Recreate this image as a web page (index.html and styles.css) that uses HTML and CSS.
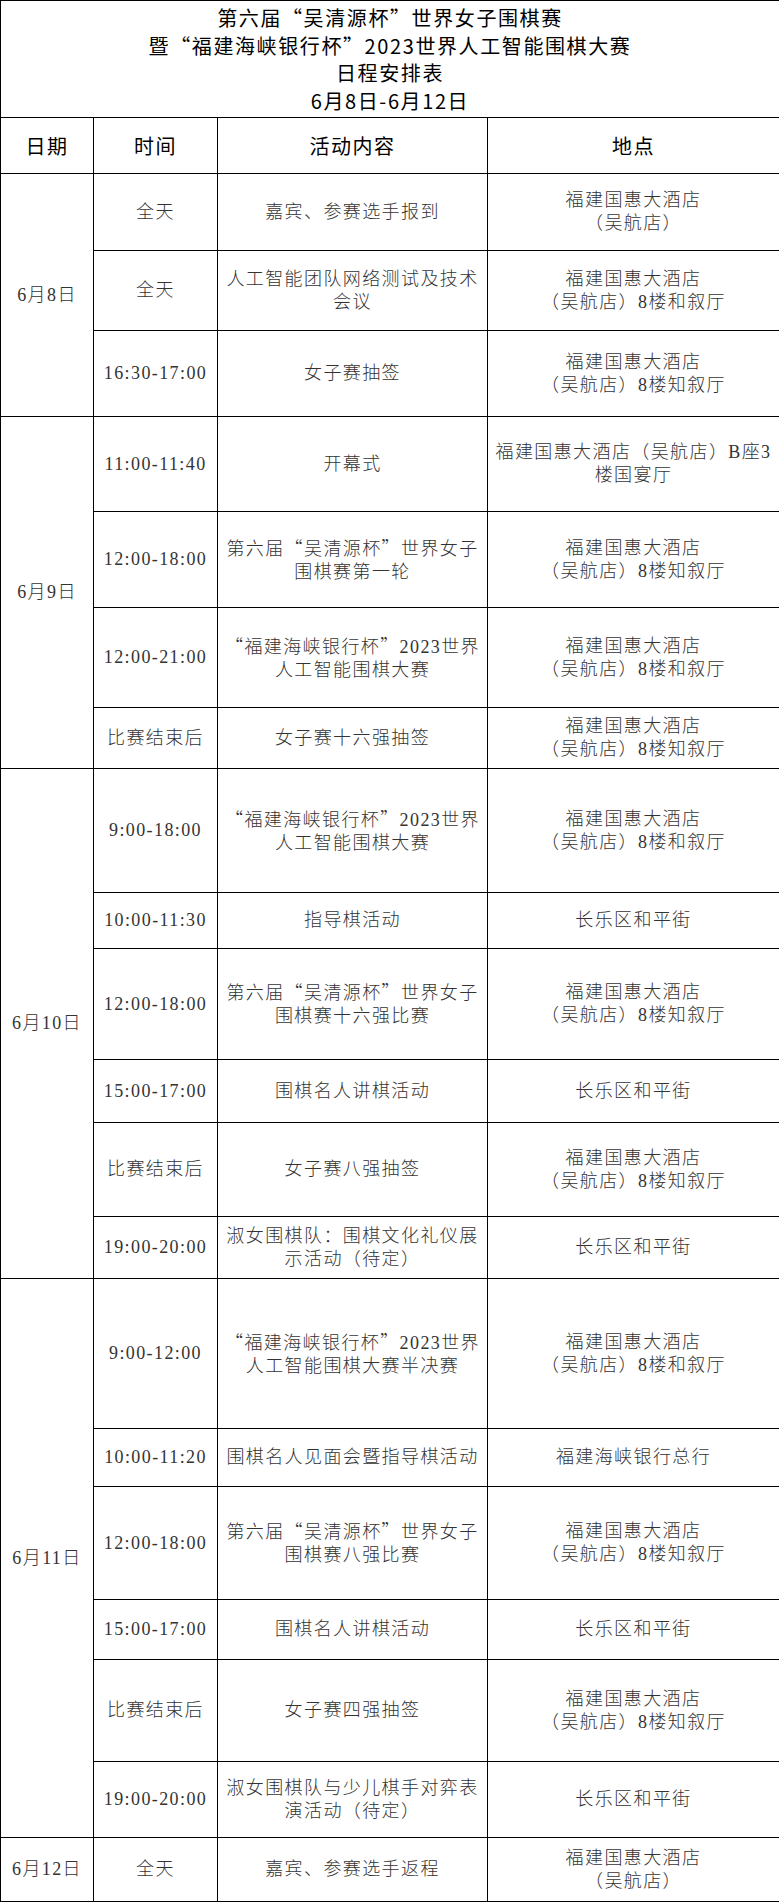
FILE: index.html
```html
<!DOCTYPE html>
<html lang="zh-CN">
<head>
<meta charset="utf-8">
<title>日程安排表</title>
<link rel="stylesheet" href="styles.css">
</head>
<body>
<table class="schedule">
  <colgroup>
    <col class="c-date">
    <col class="c-time">
    <col class="c-act">
    <col class="c-place">
  </colgroup>
  <tr class="r-title">
    <td colspan="4" class="title">第六届“吴清源杯”世界女子围棋赛<br>暨“福建海峡银行杯”2023世界人工智能围棋大赛<br>日程安排表<br>6月8日-6月12日</td>
  </tr>
  <tr class="r-head">
    <th>日期</th><th>时间</th><th>活动内容</th><th>地点</th>
  </tr>

  <tr class="h77">
    <td rowspan="3">6月8日</td>
    <td>全天</td>
    <td>嘉宾、参赛选手报到</td>
    <td>福建国惠大酒店<br>（吴航店）</td>
  </tr>
  <tr class="h80">
    <td>全天</td>
    <td>人工智能团队网络测试及技术<br>会议</td>
    <td>福建国惠大酒店<br>（吴航店）8楼和叙厅</td>
  </tr>
  <tr class="h86">
    <td>16:30-17:00</td>
    <td>女子赛抽签</td>
    <td>福建国惠大酒店<br>（吴航店）8楼知叙厅</td>
  </tr>

  <tr class="h95">
    <td rowspan="4">6月9日</td>
    <td>11:00-11:40</td>
    <td>开幕式</td>
    <td>福建国惠大酒店（吴航店）B座3<br>楼国宴厅</td>
  </tr>
  <tr class="h96">
    <td>12:00-18:00</td>
    <td>第六届<span class="q">“</span>吴清源杯<span class="q">”</span>世界女子<br>围棋赛第一轮</td>
    <td>福建国惠大酒店<br>（吴航店）8楼知叙厅</td>
  </tr>
  <tr class="h100">
    <td>12:00-21:00</td>
    <td><span class="q">“</span>福建海峡银行杯<span class="q">”</span>2023世界<br>人工智能围棋大赛</td>
    <td>福建国惠大酒店<br>（吴航店）8楼和叙厅</td>
  </tr>
  <tr class="h61">
    <td>比赛结束后</td>
    <td>女子赛十六强抽签</td>
    <td>福建国惠大酒店<br>（吴航店）8楼知叙厅</td>
  </tr>

  <tr class="h124">
    <td rowspan="6">6月10日</td>
    <td>9:00-18:00</td>
    <td><span class="q">“</span>福建海峡银行杯<span class="q">”</span>2023世界<br>人工智能围棋大赛</td>
    <td>福建国惠大酒店<br>（吴航店）8楼和叙厅</td>
  </tr>
  <tr class="h56">
    <td>10:00-11:30</td>
    <td>指导棋活动</td>
    <td>长乐区和平街</td>
  </tr>
  <tr class="h111">
    <td>12:00-18:00</td>
    <td>第六届<span class="q">“</span>吴清源杯<span class="q">”</span>世界女子<br>围棋赛十六强比赛</td>
    <td>福建国惠大酒店<br>（吴航店）8楼知叙厅</td>
  </tr>
  <tr class="h63">
    <td>15:00-17:00</td>
    <td>围棋名人讲棋活动</td>
    <td>长乐区和平街</td>
  </tr>
  <tr class="h94">
    <td>比赛结束后</td>
    <td>女子赛八强抽签</td>
    <td>福建国惠大酒店<br>（吴航店）8楼知叙厅</td>
  </tr>
  <tr class="h62">
    <td>19:00-20:00</td>
    <td>淑女围棋队：围棋文化礼仪展<br>示活动（待定）</td>
    <td>长乐区和平街</td>
  </tr>

  <tr class="h150">
    <td rowspan="6">6月11日</td>
    <td>9:00-12:00</td>
    <td><span class="q">“</span>福建海峡银行杯<span class="q">”</span>2023世界<br>人工智能围棋大赛半决赛</td>
    <td>福建国惠大酒店<br>（吴航店）8楼和叙厅</td>
  </tr>
  <tr class="h58">
    <td>10:00-11:20</td>
    <td>围棋名人见面会暨指导棋活动</td>
    <td>福建海峡银行总行</td>
  </tr>
  <tr class="h113">
    <td>12:00-18:00</td>
    <td>第六届<span class="q">“</span>吴清源杯<span class="q">”</span>世界女子<br>围棋赛八强比赛</td>
    <td>福建国惠大酒店<br>（吴航店）8楼知叙厅</td>
  </tr>
  <tr class="h60">
    <td>15:00-17:00</td>
    <td>围棋名人讲棋活动</td>
    <td>长乐区和平街</td>
  </tr>
  <tr class="h102">
    <td>比赛结束后</td>
    <td>女子赛四强抽签</td>
    <td>福建国惠大酒店<br>（吴航店）8楼知叙厅</td>
  </tr>
  <tr class="h76">
    <td>19:00-20:00</td>
    <td>淑女围棋队与少儿棋手对弈表<br>演活动（待定）</td>
    <td>长乐区和平街</td>
  </tr>

  <tr class="h64">
    <td>6月12日</td>
    <td>全天</td>
    <td>嘉宾、参赛选手返程</td>
    <td>福建国惠大酒店<br>（吴航店）</td>
  </tr>
</table>
</body>
</html>
```

FILE: styles.css
```css
html, body {
  margin: 0;
  padding: 0;
  background: #ffffff;
}

.schedule {
  width: 779px;
  border-collapse: collapse;
  table-layout: fixed;
  font-family: "Liberation Serif", "Noto Sans CJK SC", serif;
  font-size: 18px;
  letter-spacing: 1.4px;
  line-height: 23px;
  color: #333333;
  text-spacing-trim: space-all;
}

.c-date { width: 93px; }
.c-time { width: 124px; }
.c-act { width: 270px; }
.c-place { width: 292px; }

.schedule td,
.schedule th {
  border: 1px solid #000;
  padding: 0 2px;
  text-align: center;
  vertical-align: middle;
  white-space: nowrap;
  font-weight: 300;
}

.q {
  font-family: "Noto Sans CJK SC", sans-serif;
}

.r-title { height: 117px; }

.schedule .title {
  font-family: "Noto Sans CJK SC", sans-serif;
  font-size: 20px;
  letter-spacing: 1.6px;
  line-height: 27.5px;
  color: #000;
  font-weight: 400;
}

.r-head { height: 56px; }

.schedule .r-head th {
  font-family: "Noto Sans CJK SC", sans-serif;
  font-size: 20px;
  letter-spacing: 1.5px;
  font-weight: 400;
  color: #000;
}

.h56 { height: 56px; }
.h58 { height: 58px; }
.h60 { height: 60px; }
.h61 { height: 61px; }
.h62 { height: 62px; }
.h63 { height: 63px; }
.h64 { height: 64px; }
.h76 { height: 76px; }
.h77 { height: 77px; }
.h80 { height: 80px; }
.h86 { height: 86px; }
.h94 { height: 94px; }
.h95 { height: 95px; }
.h96 { height: 96px; }
.h100 { height: 100px; }
.h102 { height: 102px; }
.h111 { height: 111px; }
.h113 { height: 113px; }
.h124 { height: 124px; }
.h150 { height: 150px; }
```
